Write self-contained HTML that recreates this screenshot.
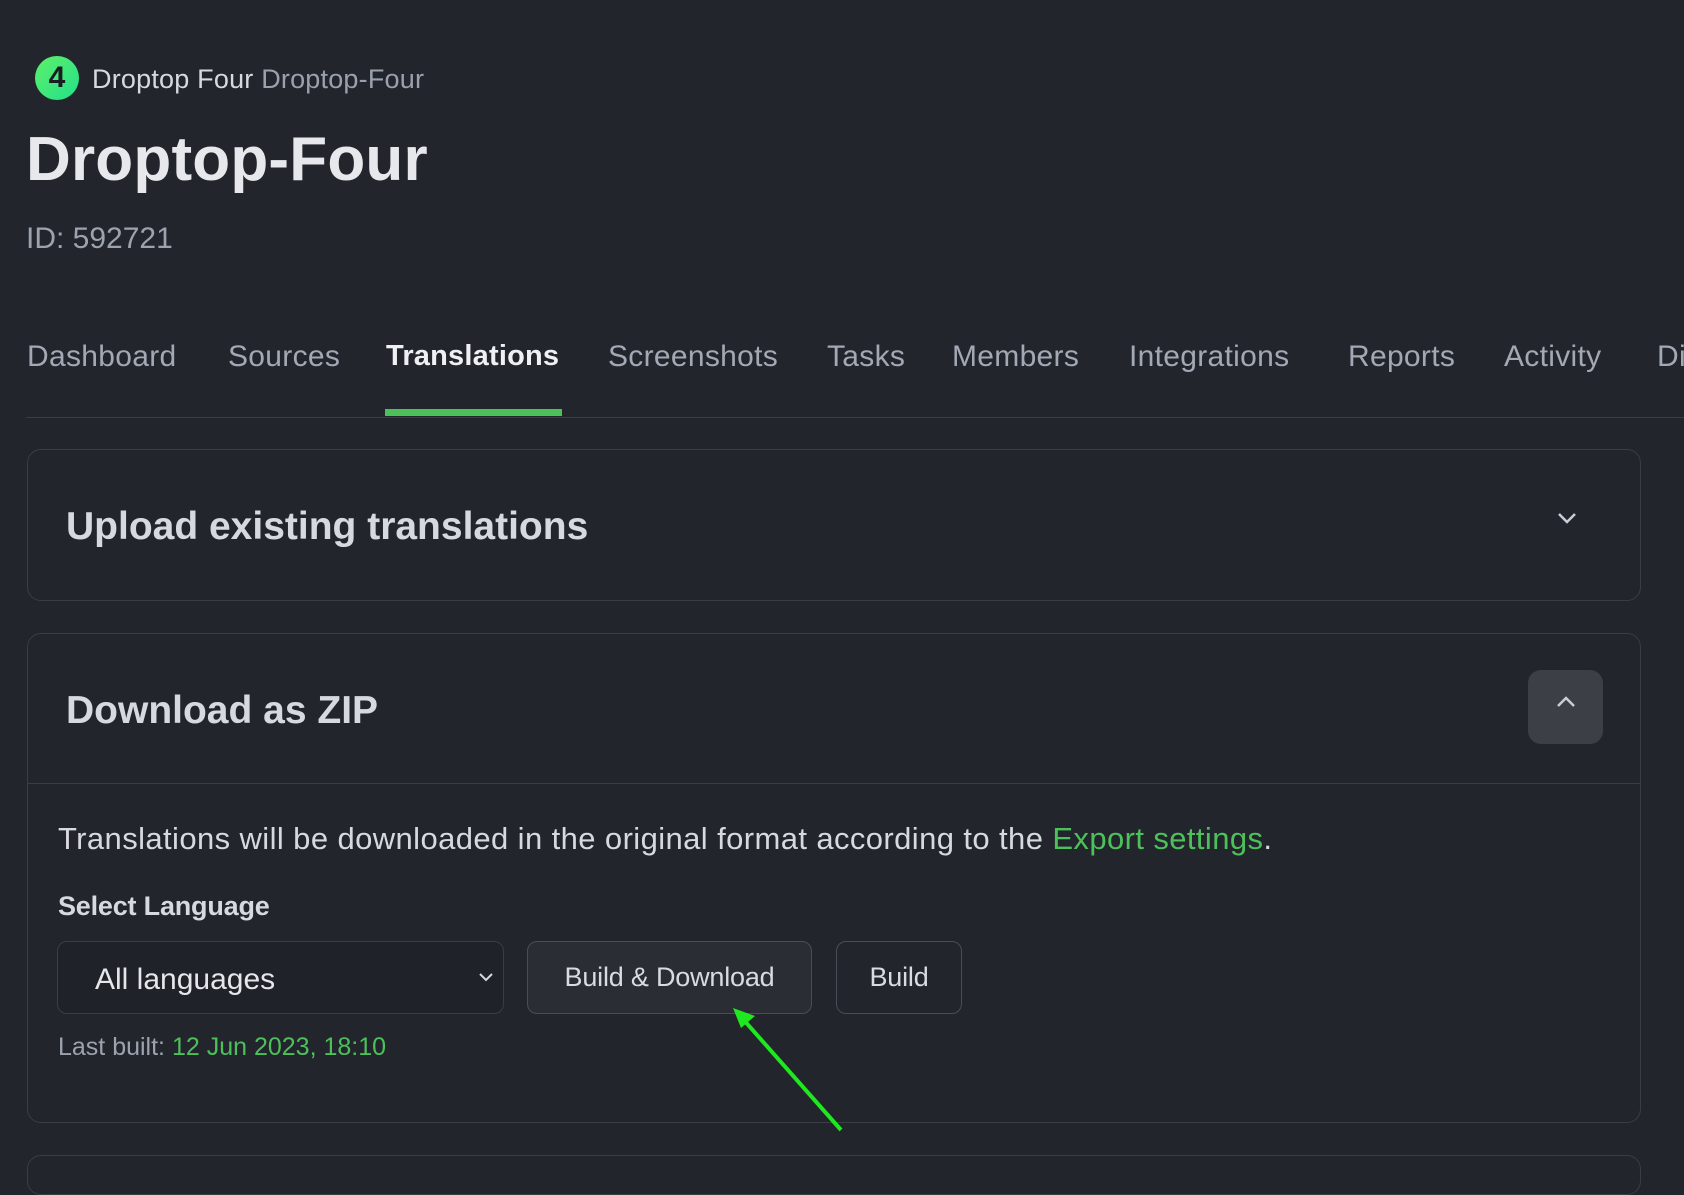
<!DOCTYPE html>
<html><head><meta charset="utf-8"><style>
*{margin:0;padding:0;box-sizing:border-box}
body{width:1684px;height:1162px;background:#22252c;font-family:"Liberation Sans",sans-serif;color:#e5e7eb;position:relative;overflow:hidden}
.a{position:absolute;white-space:nowrap}
.tab{position:absolute;top:340px;font-size:30px;color:#a3a9b4;letter-spacing:0.3px}
.card{position:absolute;left:27px;width:1614px;border:1px solid #3a3d44;border-radius:14px}
.btn{position:absolute;top:941px;height:73px;border:1px solid #4a4d55;border-radius:10px;font-size:27px;display:flex;align-items:center;justify-content:center;color:#d8dbe0;letter-spacing:-0.2px}
</style></head><body>
<div class="a" style="left:35px;top:56px;width:44px;height:44px;border-radius:50%;background:linear-gradient(135deg,#5ef06a,#22e08a);color:#1a1d22;font-weight:bold;font-size:30px;text-align:center;line-height:44px">4</div>
<div class="a" style="left:92px;top:64px;font-size:27px;letter-spacing:0.2px;color:#d6d9de">Droptop Four <span style="color:#9aa1ad">Droptop-Four</span></div>
<div class="a" style="left:26px;top:124px;font-size:62px;font-weight:bold;letter-spacing:0.2px;color:#e6e8ec">Droptop-Four</div>
<div class="a" style="left:26px;top:222px;font-size:30px;color:#9ca3af;letter-spacing:0px">ID: 592721</div>
<div class="tab" style="left:27px">Dashboard</div>
<div class="tab" style="left:228px">Sources</div>
<div class="tab" style="left:386px;color:#eef0f3;font-weight:bold;font-size:29px;letter-spacing:0.2px">Translations</div>
<div class="tab" style="left:608px">Screenshots</div>
<div class="tab" style="left:827px">Tasks</div>
<div class="tab" style="left:952px">Members</div>
<div class="tab" style="left:1129px">Integrations</div>
<div class="tab" style="left:1348px">Reports</div>
<div class="tab" style="left:1504px">Activity</div>
<div class="tab" style="left:1657px">Di</div>
<div class="a" style="left:26px;top:417px;width:1658px;height:1px;background:#3a3d44"></div>
<div class="a" style="left:385px;top:409px;width:177px;height:7px;background:#4cc15a"></div>

<div class="card" style="top:449px;height:152px"></div>
<div class="a" style="left:66px;top:505px;font-size:39px;font-weight:bold;color:#d6d9de;letter-spacing:0px">Upload existing translations</div>
<svg class="a" style="left:1556px;top:510px" width="22" height="16"><path d="M3 4l8 8 8-8" stroke="#c9ced6" stroke-width="2.5" fill="none"/></svg>

<div class="card" style="top:633px;height:490px"></div>
<div class="a" style="left:28px;top:783px;width:1612px;height:1px;background:#3a3d44"></div>
<div class="a" style="left:66px;top:689px;font-size:39px;font-weight:bold;color:#d6d9de;letter-spacing:0px">Download as ZIP</div>
<div class="a" style="left:1528px;top:670px;width:75px;height:74px;border-radius:13px;background:#3c3f45"></div>
<svg class="a" style="left:1555px;top:694px" width="22" height="16"><path d="M3 12l8-8 8 8" stroke="#c9ced6" stroke-width="2.5" fill="none"/></svg>
<div class="a" style="left:58px;top:821px;font-size:31px;color:#d6d9de;letter-spacing:0.4px">Translations will be downloaded in the original format according to the <span style="color:#4cc15a">Export settings</span>.</div>
<div class="a" style="left:58px;top:891px;font-size:27px;font-weight:bold;color:#d6d9de;letter-spacing:-0.2px">Select Language</div>
<div class="a" style="left:57px;top:941px;width:447px;height:73px;border:1px solid #3a3d44;border-radius:10px;background:#1f2228"></div>
<div class="a" style="left:95px;top:963px;font-size:30px;color:#e5e7eb;letter-spacing:0px">All languages</div>
<svg class="a" style="left:477px;top:971px" width="18" height="12"><path d="M3 3l6 6 6-6" stroke="#d6d9de" stroke-width="2" fill="none"/></svg>
<div class="btn" style="left:527px;width:285px;background:#2a2d33">Build &amp; Download</div>
<div class="btn" style="left:836px;width:126px">Build</div>
<div class="a" style="left:58px;top:1033px;font-size:25px;color:#9ca3af;letter-spacing:0px">Last built: <span style="color:#4cc15a">12 Jun 2023, 18:10</span></div>
<div class="card" style="top:1155px;height:40px"></div>
<svg class="a" style="left:0;top:0" width="1684" height="1162"><line x1="841" y1="1130" x2="742" y2="1018" stroke="#1ee81e" stroke-width="4"/><path d="M733 1008l22 8-14 12z" fill="#1ee81e"/></svg>
</body></html>
